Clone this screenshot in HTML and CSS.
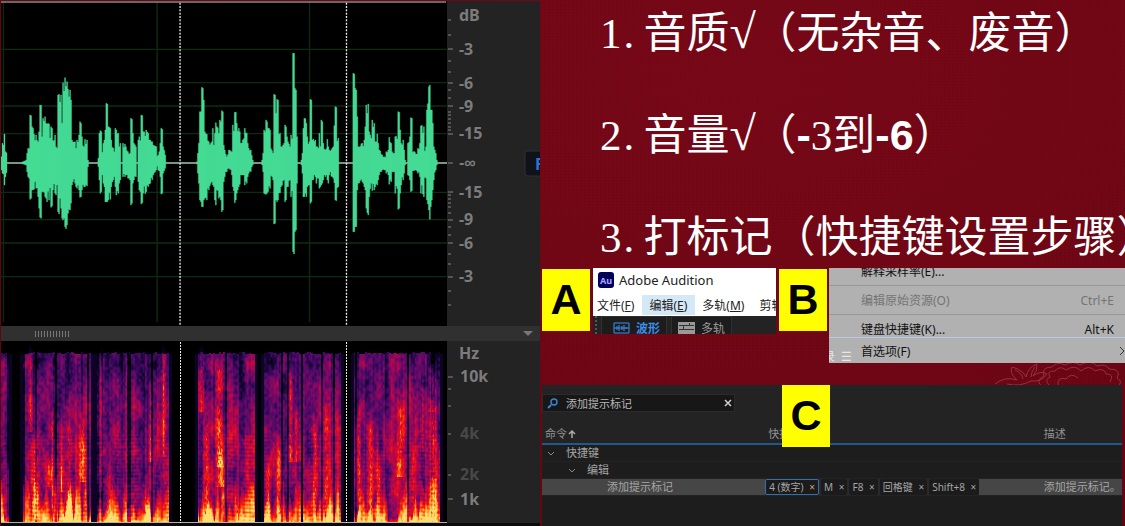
FILE: index.html
```html
<!DOCTYPE html>
<html lang="zh-CN">
<head>
<meta charset="utf-8">
<title>音频标记步骤</title>
<link rel="stylesheet" href="styles.css">
</head>
<body>
<main class="slide">
  <section class="editor">
    <div class="track track-wave">
      <svg class="plot" viewBox="3 3 1340 975" preserveAspectRatio="none" role="img" aria-label="波形">
        <g class="grid-lines">
          <path d="M3 148H1343M3 248H1343M3 318H1343M3 401H1343M3 577H1343M3 659H1343M3 729H1343M3 830H1343"/>
          <path d="M10 6V966M472 6V966M930 6V966"/>
        </g>
        <path class="top-line" d="M3 6H1340"/>
        <path class="zero-line" d="M3 489H1343"/>
        <g id="wave" class="wave"></g>
        <path class="marker" d="M541 8V978M1041 8V978"/>
      </svg>
      <svg class="axis" viewBox="0 0 93 325" preserveAspectRatio="none">
        <path class="tick" d="M1 48H6M1 82H6M1 105H6M1 133H6M1 162H6M1 191H6M1 219H6M1 242H6M1 276H6"/>
        <path class="tick" d="M1 19H4M1 34H4M1 60H4M1 71H4M1 89H4M1 97H4M1 111H4M1 114H4M1 118H4M1 122H4M1 126H4M1 129H4M1 194H4M1 198H4M1 202H4M1 206H4M1 212H4M1 226H4M1 234H4M1 253H4M1 263H4M1 290H4M1 304H4"/>
        <g class="label">
          <text x="12" y="20">dB</text><text x="12" y="54">-3</text><text x="12" y="88">-6</text>
          <text x="12" y="111">-9</text><text x="12" y="138">-15</text><text class="inf" x="12" y="167">-∞</text>
          <text x="12" y="197">-15</text><text x="12" y="224">-9</text><text x="12" y="248">-6</text>
          <text x="12" y="281">-3</text>
        </g>
        <rect class="hud" x="78" y="150" width="24" height="25" rx="3"/>
        <text class="hud-text" x="88" y="169">F</text>
      </svg>
    </div>
    <div class="splitter">
      <span class="grip"></span>
      <span class="caret"></span>
    </div>
    <div class="track track-spectrum">
      <canvas id="spectrum" class="plot" width="446" height="182"></canvas>
      <svg class="axis" viewBox="0 0 93 182" preserveAspectRatio="none">
        <path class="tick" d="M1 36H6M1 158H6M1 48H4M1 65H4M1 93H4M1 134H4"/>
        <g class="label">
          <text x="12" y="18">Hz</text><text x="13" y="41">10k</text>
          <text class="dim" x="13" y="98">4k</text><text class="dim" x="13" y="139">2k</text>
          <text x="13" y="164">1k</text>
        </g>
      </svg>
    </div>
  </section>

  <section class="content">
    <ol class="notes">
      <li><span class="num">1</span><span class="dot">.</span>音质<span class="root">√</span>（无杂音、废音）</li>
      <li><span class="num">2</span><span class="dot">.</span>音量<span class="root">√</span>（<b>-</b><span class="num">3</span>到<b>-6</b>）</li>
      <li><span class="num">3</span><span class="dot">.</span>打标记（快捷键设置步骤）</li>
    </ol>

    <div class="figures">
      <strong class="badge">A</strong>
      <div class="app">
        <div class="app-title">
          <svg class="app-logo" viewBox="0 0 16 16"><rect width="16" height="16" rx="3" fill="#00005b"/><text x="8" y="12" text-anchor="middle">Au</text></svg>
          Adobe Audition
        </div>
        <nav class="app-menu">
          <button>文件(<u>F</u>)</button>
          <button class="on">编辑(<u>E</u>)</button>
          <button>多轨(<u>M</u>)</button>
          <button>剪辑</button>
        </nav>
        <div class="app-tools">
          <span class="handle"></span>
          <button class="tool on"><svg viewBox="0 0 17 12"><path d="M1 1H16V11H1ZM1 6H16M4 4V8M6 3V9M9 4V8M11 3V9M13 5V7" fill="none" stroke="currentColor"/></svg>波形</button>
          <button class="tool"><svg viewBox="0 0 17 12"><path d="M0 0H17V12H0Z" fill="#999"/><path d="M1 3.5H16M5.500 4V7M11.500 1V3M1 7.500H16" fill="none" stroke="#333"/></svg>多轨</button>
        </div>
      </div>
      <strong class="badge">B</strong>
      <div class="menu">
        <button class="item cut"><span>解释采样率(E)...</span></button>
        <button class="item off"><span>编辑原始资源(O)</span><kbd>Ctrl+E</kbd></button>
        <button class="item key"><span>键盘快捷键(K)...</span><kbd>Alt+K</kbd></button>
        <button class="item last"><span>首选项(F)</span><svg class="more" viewBox="0 0 6 10"><path d="M1 1L5 5L1 9" fill="none" stroke="#333"/></svg></button>
        <span class="ghost">录&nbsp; ☰</span>
      </div>
    </div>

    <div class="ornament">
      <svg viewBox="0 0 130 24" fill="none" stroke="#98303e">
        <path d="M0 21Q10 13 22 17Q14 10 17 4Q28 7 31 14Q33 4 42 1Q43 8 38 13Q46 7 52 11Q47 19 36 18Q25 24 12 21M20 7Q27 10 28 16M40 4Q36 9 36 14"/>
        <path d="M48 24Q39 18 49 13Q46 4 57 4Q62-2 70 2Q78-3 85 2Q96-4 102 3Q111 0 114 6Q127 6 122 15Q129 19 122 24M54 22Q49 17 55 14Q51 8 60 8Q65 2 71 7Q80 1 86 8Q94 1 100 8Q109 4 111 11Q120 11 115 19M63 23Q62 13 71 16Q76 9 83 15"/>
      </svg>
    </div>

    <div class="shortcuts">
      <strong class="badge badge-c">C</strong>
      <label class="search">
        <svg viewBox="0 0 12 12"><path d="M4 8L1 11" stroke="#3f82d2" stroke-width="2"/><circle cx="7" cy="5" r="3" fill="none" stroke="#3f82d2" stroke-width="1.4"/></svg>
        <input type="text" value="添加提示标记" aria-label="搜索命令">
        <button aria-label="清除"><svg viewBox="0 0 8 8"><path d="M1 1L7 7M7 1L1 7" stroke="#d0d0d0" stroke-width="1.5"/></svg></button>
      </label>
      <table>
        <colgroup><col class="c-cmd"><col class="c-key"><col></colgroup>
        <thead><tr><th>命令<svg class="sort" viewBox="0 0 8 8"><path d="M4 8V1M1 4L4 1L7 4" fill="none" stroke="#aaa" stroke-width="1.5"/></svg></th><th>快捷键</th><th>描述</th></tr></thead>
        <tbody>
          <tr><td class="l1"><svg class="chev" viewBox="0 0 8 8"><path d="M1 3L4 6L7 3" fill="none" stroke="#888"/></svg>快捷键</td><td></td><td></td></tr>
          <tr><td class="l2"><svg class="chev" viewBox="0 0 8 8"><path d="M1 3L4 6L7 3" fill="none" stroke="#888"/></svg>编辑</td><td></td><td></td></tr>
          <tr class="selected"><td class="l3">添加提示标记</td>
            <td class="keys"><div class="chips">
              <button class="chip on">4 (数字)<i>×</i></button><button class="chip">M<i>×</i></button><button class="chip">F8<i>×</i></button><button class="chip">回格键<i>×</i></button><button class="chip">Shift+8<i>×</i></button>
            </div></td>
            <td>添加提示标记。</td></tr>
        </tbody>
      </table>
    </div>
  </section>
</main>
<script src="plots.js"></script>
</body>
</html>
```

FILE: styles.css
```css
* { box-sizing: border-box; }
body {
  margin: 0;
  font-family: "Noto Sans", "Noto Sans CJK SC", sans-serif;
  background: #6b0715;
}
button { font: inherit; color: inherit; background: none; border: 0; padding: 0; }
svg { display: block; }

.slide {
  display: grid;
  grid-template-columns: 48fr 52fr;
  min-height: 100vh;
  overflow: hidden;
  background:
    repeating-linear-gradient(0deg, rgba(0, 0, 0, .03) 0 1px, transparent 1px 3px),
    repeating-linear-gradient(90deg, rgba(0, 0, 0, .03) 0 1px, transparent 1px 4px),
    radial-gradient(ellipse at 65% 15%, #790817, #700615 50%, #5c0411);
}

/* Audio editor */
.editor {
  display: grid;
  grid-template-rows: 325fr 15fr 185fr;
  padding: 1px 0 0 1px;
}
.track {
  display: grid;
  grid-template-columns: 446fr 93fr;
  min-height: 0;
  background: #000;
}
.plot, .axis { display: block; width: 100%; height: 100%; min-height: 0; }
.axis { background: #232323; overflow: hidden; }
.track-spectrum { border-bottom: 3px solid #0b0b0b; }
.grid-lines path { fill: none; stroke: #0c2c12; stroke-width: 4; }
.top-line { stroke: #8a8a8a; stroke-width: 4; }
.zero-line { stroke: #9fc9b0; stroke-width: 4; }
.wave path { fill: #46db96; stroke: #46db96; stroke-width: 1; }
.marker { fill: none; stroke: #e8e8e8; stroke-width: 4; stroke-dasharray: 6 4; }
.tick { stroke: #858585; fill: none; }
.label { font-family: "Noto Sans", sans-serif; font-size: 16px; font-weight: 700; fill: #7c7c7c; }
.label .dim { fill: #484848; }
.label .inf { font-family: "Liberation Sans", sans-serif; }
.hud { fill: #10121a; stroke: #303030; }
.hud-text { font-size: 16px; font-weight: 700; fill: #2b74d8; }
.splitter {
  display: flex;
  align-items: center;
  justify-content: space-between;
  padding: 0 7px 0 34px;
  background: #303030;
}
.grip {
  width: 36px;
  height: 6px;
  background: repeating-linear-gradient(90deg, #777 0 1px, transparent 1px 3px);
}
.caret { border: 5px solid transparent; border-top-color: #777; border-bottom: 0; }

/* Notes */
.content { display: flex; flex-direction: column; min-width: 0; overflow: hidden; }
.notes {
  margin: 0;
  padding: 2px 0 0 60px;
  height: 268px;
  list-style: none;
  white-space: nowrap;
  color: #fff;
  font-family: "Liberation Sans", "Noto Sans CJK SC", sans-serif;
  font-size: 43px;
  line-height: 62px;
}
.notes li { height: 62px; margin-bottom: 40px; }
.num { font-family: "Liberation Serif", serif; }
.dot { display: inline-block; width: 22px; padding-left: 2px; font-family: "Liberation Serif", serif; }
.root { display: inline-block; width: 24px; font-family: "Liberation Serif", serif; font-size: 48px; line-height: 48px; }

/* Step figures */
.figures { display: flex; align-items: flex-start; gap: 3px; padding-left: 2px; height: 95px; }
.badge {
  flex: none;
  width: 48px;
  height: 62px;
  margin-top: 1px;
  background: #ff0;
  color: #000;
  font: 700 43px/60px "Liberation Sans", sans-serif;
  text-align: center;
}
.app { width: 183px; height: 66px; flex: none; overflow: hidden; background: #fff; font-size: 12px; color: #222; }
.app-title { display: flex; align-items: center; gap: 5px; height: 24px; padding-left: 5px; font-size: 13px; }
.app-logo { width: 16px; height: 16px; }
.app-logo text { font: 700 9px "Noto Sans", sans-serif; fill: #a9a9ff; }
.app-menu { display: flex; height: 24px; white-space: nowrap; line-height: 22px; padding: 3px 0 1px; }
.app-menu button { flex: none; padding: 0 8px 0 7px; }
.app-menu button:first-child { padding-left: 4px; }
.app-menu .on { background: #d5e8f6; }
.app-tools { display: flex; gap: 4px; height: 18px; overflow: hidden; background: #232323; color: #999; padding-left: 2px; }
.handle { width: 2px; border-left: 2px dotted #555; }
.tool { display: flex; align-items: center; gap: 6px; height: 24px; padding: 0 6px 0 11px; background: #1c1c1c; border: 1px solid #303030; }
.tool + .tool { padding-left: 6px; }
.tool svg { width: 17px; height: 12px; }
.tool.on { color: #3b8eea; font-weight: 600; }

.menu {
  position: relative;
  flex: 1;
  min-width: 0;
  height: 95px;
  overflow: hidden;
  margin-left: -1px;
  background: #b1b1b1;
  font-size: 12px;
  color: #111;
}
.item { display: flex; align-items: center; justify-content: space-between; width: 100%; padding: 0 11px 0 32px; height: 30px; }
.item kbd { font: inherit; font-size: 12px; }
.cut { height: 17px; padding-bottom: 11px; }
.off { color: #747474; border-top: 1px solid #999; border-bottom: 1px solid #999; }
.key { height: 23px; padding-top: 6px; border-bottom: 1px solid #b9cbe4; }
.last { height: 25px; padding-right: 0; }
.more { width: 6px; height: 10px; }
.ghost { position: absolute; left: -6px; bottom: -2px; color: #e6e6e6; }

.ornament { display: flex; justify-content: flex-end; height: 22px; overflow: hidden; }
.ornament svg { width: 130px; height: 24px; }

/* Shortcut table */
.shortcuts {
  position: relative;
  flex: 1;
  margin: 0 3px 0 2px;
  padding-top: 9px;
  background: linear-gradient(#232323 0 59px, #1d1d1d 59px);
  color: #a5a5a5;
  font-size: 11px;
}
.badge-c { position: absolute; left: 240px; top: 0; margin: 0; }
.search { display: flex; align-items: center; width: 193px; height: 18px; padding: 0 2px 0 4px; background: #171717; border: 1px solid #2b2b2b; }
.search svg { width: 12px; height: 12px; }
.search input { flex: 1; min-width: 0; border: 0; padding: 0 0 0 7px; background: none; color: #b8b8b8; font: inherit; }
.search button svg { width: 8px; height: 8px; }
table { width: 100%; table-layout: fixed; border-collapse: collapse; margin-top: 13px; line-height: 16px; }
.c-cmd { width: 38.5%; }
.c-key { width: 47.5%; }
th { height: 19px; padding: 0 3px; text-align: left; font-weight: 400; border-bottom: 2px solid #24588a; color: #929292; }
td { height: 17px; padding: 0 0 0 3px; white-space: nowrap; border-bottom: 1px solid #232323; }
.sort { display: inline-block; width: 8px; height: 8px; margin-left: 1px; }
.chev { display: inline-block; width: 8px; height: 8px; margin-right: 11px; }
.l1 { padding-left: 5px; }
.l2 { padding-left: 26px; }
.l3 { padding-left: 65px; }
.selected td { background: #464646; }
.selected .keys { padding: 0; }
.chips { display: flex; gap: 2px; width: 214px; height: 16px; background: #2a2a2a; font-size: 10px; }
.chip { display: flex; align-items: center; flex: auto; justify-content: space-between; padding: 0 3px; background: #1b1b1b; border-radius: 2px; white-space: nowrap; }
.chip i { font-style: normal; padding-left: 3px; }
.chip.on { border: 1px solid #2f6fb2; }
.chip.on i { color: #d0a080; }
```

FILE: plots.js
```js
// Envelope samples: x, top, bottom. Zero level is 489.
const bursts = [
  '3,470,510 8,430,520 12,402,555 14,402,555 16,455,530 20,458,518',
  '65,486,492 78,480,495 80,460,515 84,445,530 90,420,560 91,345,598 94,347,595 97,380,570 102,403,568 108,405,565 113,425,590 116,395,625 119,315,652 122,316,655 124,375,625 126,410,575 129,355,575 135,350,590 140,372,605 146,372,600 148,408,545 152,380,622 155,385,618 157,410,565 164,405,580 168,440,585 172,445,555 174,285,635 177,283,642 182,285,625 184,370,560 187,370,655 190,248,660 194,233,680 200,245,675 203,268,640 209,270,630 214,300,610 216,420,555 224,425,550 228,445,560 232,420,565 238,405,570 240,365,592 243,370,590 245,410,570 252,440,560 255,418,560 262,420,558 264,480,500',
  '294,475,500 298,400,540 300,392,580 303,395,575 305,460,520 309,430,550 314,420,560 317,390,605 319,310,606 322,312,605 324,380,600 330,385,598 333,420,560 340,445,540 344,455,530 346,385,560 350,390,585 354,400,580 357,440,550 362,430,540',
  '368,430,530 374,432,530 378,440,525 384,455,535 390,460,540 392,355,615 395,358,610 398,400,550 402,430,540 408,440,530',
  '414,420,545 418,410,570 424,400,575 425,345,612 428,347,608 430,395,580 440,390,575 446,400,560 452,420,550 460,435,525 468,440,510 470,470,500 476,465,510 480,430,530 485,385,582 488,388,580 490,440,520 496,465,505',
  '590,485,492 594,460,520 598,430,550 600,335,600 603,335,605 605,262,620 610,265,620 612,300,600 615,395,595 620,403,600 626,425,570 632,430,550 636,425,545 638,385,555 641,435,560 644,400,600 648,368,615 652,380,570 656,400,595 660,360,590 665,332,635 668,335,630 670,430,560 674,450,530 680,470,515 688,450,505 695,455,525 700,375,560 706,337,608 709,337,600 712,370,580 718,385,560 722,430,525 730,420,525 736,385,555 740,400,550 744,430,530 752,450,515 758,480,495',
  '786,480,495 789,460,515 793,390,580 797,395,582 800,360,583 803,365,580 806,385,575 810,390,565 812,440,530 820,460,540 822,283,672 825,285,670 827,345,580 830,340,600 832,298,605 834,300,600 836,398,580 842,400,578 845,440,560 852,430,540 855,375,605 858,380,600 862,410,560 866,425,560 870,440,540 873,405,590 880,405,600 881,160,755 884,160,762 886,265,695 889,270,690 890,405,570 893,410,550',
  '904,480,495 908,460,520 911,385,590 915,355,590 919,370,590 922,410,560 928,425,555 932,430,580 933,298,610 936,300,605 938,420,540 947,420,530 950,440,550 956,445,535 958,400,565 962,440,560 965,360,555 968,365,550 970,430,540 978,450,530 984,418,540 986,440,550 990,450,525 1000,440,535 1006,320,600 1009,322,602 1011,410,570 1015,415,560 1017,470,500',
  '1060,455,520 1062,220,695 1065,222,695 1067,265,680 1069,270,680 1071,350,590 1074,350,570 1076,440,550 1088,430,545 1094,420,560 1098,380,570 1100,315,625 1105,312,645 1107,350,620 1110,395,590 1115,415,550 1118,360,572 1124,370,570 1127,425,560 1132,402,555 1136,430,540 1140,450,525 1148,465,510 1155,470,510 1160,455,520 1166,450,525 1170,412,553 1174,430,545 1178,455,515 1184,460,515 1188,410,580 1195,395,582 1196,335,628 1199,337,625 1201,390,580 1204,430,555 1210,420,540 1215,450,520 1218,480,495',
  '1224,430,525 1230,410,540 1233,353,575 1236,355,572 1238,450,520 1250,462,510 1255,445,520 1262,430,530 1265,378,580 1272,380,590 1274,450,540 1280,440,535 1283,330,600 1288,260,630 1290,255,658 1293,330,620 1298,330,600 1300,370,570 1302,440,540 1308,460,510 1312,480,495'
];

function hash(x, y) {
  let n = Math.imul(x, 374761393) + Math.imul(y, 668265263);
  n = Math.imul(n ^ (n >>> 13), 1274126177);
  return ((n ^ (n >>> 16)) >>> 0) / 4294967296;
}
function noise(x, y) {
  const xi = Math.floor(x), yi = Math.floor(y), fx = x - xi, fy = y - yi;
  const top = hash(xi, yi) * (1 - fx) + hash(xi + 1, yi) * fx;
  const low = hash(xi, yi + 1) * (1 - fx) + hash(xi + 1, yi + 1) * fx;
  return top * (1 - fy) + low * fy;
}

// Each burst is drawn as a row of narrow sample bars; short bars vary most.
const ZERO = 489, STEP = 3;
const wave = document.getElementById('wave');
for (const burst of bursts) {
  const pts = burst.split(' ').map(p => p.split(',').map(Number));
  const first = pts[0][0], last = pts[pts.length - 1][0];
  let d = '';
  for (let x = first; x <= last; x += STEP) {
    const near = pts.filter(p => p[0] >= x && p[0] < x + STEP);
    let top, low;
    if (near.length) {
      top = Math.min(...near.map(p => p[1]));
      low = Math.max(...near.map(p => p[2]));
    } else {
      const i = pts.findIndex(p => p[0] > x);
      const a = pts[i - 1] || pts[pts.length - 1], b = pts[i] || a;
      const t = b[0] === a[0] ? 0 : (x - a[0]) / (b[0] - a[0]);
      top = a[1] + (b[1] - a[1]) * t;
      low = a[2] + (b[2] - a[2]) * t;
      top = ZERO - (ZERO - top) * (.78 + .27 * hash(x, 3));
      low = ZERO + (low - ZERO) * (.72 + .33 * hash(x, 5));
    }
    d += `M${x} ${top.toFixed()}h${STEP}V${low.toFixed()}h-${STEP}Z`;
  }
  const path = document.createElementNS('http://www.w3.org/2000/svg', 'path');
  path.setAttribute('d', d);
  wave.appendChild(path);
}

// Spectrogram: speech segments with vertical harmonics and low-frequency energy.
const canvas = document.getElementById('spectrum');
const ctx = canvas.getContext('2d');
const W = canvas.width, H = canvas.height;
const image = ctx.createImageData(W, H);
const stops = [
  [0, 0, 0, 0], [.14, 14, 4, 44], [.3, 72, 10, 104], [.45, 140, 8, 96],
  [.58, 206, 6, 54], [.72, 244, 28, 14], [.86, 255, 130, 28], [1, 255, 222, 110]
];
function colour(v) {
  v = Math.max(0, Math.min(1, v));
  let i = 1;
  while (stops[i][0] < v) i++;
  const a = stops[i - 1], b = stops[i], t = (v - a[0]) / (b[0] - a[0]);
  return [1, 2, 3].map(k => a[k] + (b[k] - a[k]) * t);
}
const speech = [[0, 7], [22, 89], [96, 167], [197, 253], [263, 299], [302, 339], [353, 438]];
// Strong streaks: x, half width, start y, end y, gain
const streaks = [
  [29, 2, 2, 90, .3], [34, 4, 85, 181, .28], [51, 1, 60, 181, .25], [47, 4, 105, 145, .24],
  [60, 2, 75, 150, .2], [67, 4, 65, 181, .25], [67, 5, 135, 181, .3], [81, 3, 70, 140, .3],
  [100, 1, 5, 150, .28], [107, 4, 120, 181, .24], [125, 1, 10, 181, .2], [149, 2, 40, 120, .32],
  [162, 2, 2, 115, .3], [144, 4, 140, 181, .24], [200, 2, 2, 70, .3], [205, 4, 75, 181, .3],
  [208, 6, 155, 181, .25], [218, 4, 10, 125, .36], [219, 4, 100, 145, .36], [237, 4, 145, 181, .26],
  [267, 3, 110, 181, .28], [278, 3, 90, 181, .26], [289, 2, 20, 120, .34], [295, 4, 60, 120, .26],
  [314, 2, 75, 181, .24], [325, 4, 60, 181, .22], [337, 2, 110, 181, .16], [357, 2, 60, 181, .28],
  [369, 4, 70, 181, .3], [376, 2, 80, 181, .22], [399, 5, 55, 135, .32], [412, 3, 100, 181, .24],
  [421, 2, 30, 110, .24], [432, 4, 55, 181, .36], [431, 4, 10, 70, .24]
];
for (let x = 0; x < W; x++) {
  const seg = speech.find(s => x >= s[0] && x <= s[1]);
  const line = hash(x >> 1, 7);
  const height = noise(x / 3, 90) * 46 + 2;
  for (let y = 0; y < H; y++) {
    let v = 0;
    const d = y / H;
    if (seg && y >= 10 + line * 3) {
      v = .28 + .16 * Math.min(1, d * 1.6) + (line - .5) * .16 + (noise(x / 6, y / 22) - .5) * .34 + (noise(x / 2, y / 3) - .5) * .2;
      if (H - y < height) v += .1 + .42 * (1 - (H - y) / height);
      if (d > .5) v += .06 * Math.sin(y * 1.6 + 4 * noise(x / 12, 40)) * noise(x / 5, 20);
      if (line < .1) v -= .16;
    }
    for (const s of streaks) {
      if (Math.abs(x - s[0]) <= s[1] && y >= s[2] && y <= s[3]) {
        v += s[4] * (1 - Math.abs(x - s[0]) / (s[1] + 1)) * Math.min(1, (y - s[2]) / 20) * (.6 + .8 * noise(x, y / 2));
      }
    }
    if (!seg && y > 12 && speech.some(s => x > s[0] - 4 && x < s[1] + 4)) v = .12;
    const c = colour(v), k = (y * W + x) * 4;
    image.data[k] = c[0]; image.data[k + 1] = c[1]; image.data[k + 2] = c[2]; image.data[k + 3] = 255;
  }
}
ctx.putImageData(image, 0, 0);
ctx.fillStyle = '#b8b0b0';
ctx.fillRect(0, H - 1, W, 1);
ctx.fillStyle = '#e8e8e8';
for (let y = 1; y < H; y += 3) {
  ctx.fillRect(179, y, 1, 2);
  ctx.fillRect(345, y, 1, 2);
}
```
